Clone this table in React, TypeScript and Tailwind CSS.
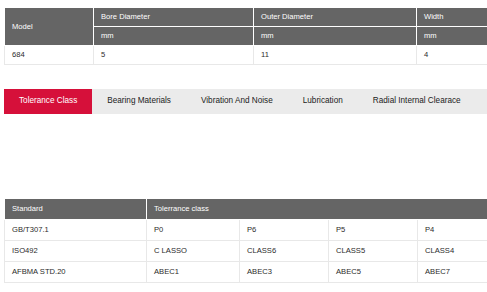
import React from 'react'

const tabs = ['Tolerance Class', 'Bearing Materials', 'Vibration And Noise', 'Lubrication', 'Radial Internal Clearace']

const rows = [
  ['GB/T307.1', 'P0', 'P6', 'P5', 'P4'],
  ['ISO492', 'C LASSO', 'CLASS6', 'CLASS5', 'CLASS4'],
  ['AFBMA STD.20', 'ABEC1', 'ABEC3', 'ABEC5', 'ABEC7'],
]

const th = 'bg-[#656565] text-white font-normal text-left px-[7px] border border-white'
const td = 'px-[7px] border border-[#e8e8e8] text-[#2b2b2b]'

export default function App() {
  return (
    <div
      className="w-[487px] h-[292px] overflow-hidden bg-white text-[7.6px] leading-none"
      style={{ fontFamily: '"Liberation Sans", Arial, sans-serif' }}
    >
      <div className="pt-[7px] pl-[4px]">
        <table className="table-fixed border-collapse w-[500px]">
          <colgroup>
            <col className="w-[89px]" />
            <col className="w-[160px]" />
            <col className="w-[163px]" />
            <col className="w-[88px]" />
          </colgroup>
          <thead>
            <tr className="h-[19px]">
              <th rowSpan={2} className={th}>Model</th>
              <th className={th}>Bore Diameter</th>
              <th className={th}>Outer Diameter</th>
              <th className={th}>Width</th>
            </tr>
            <tr className="h-[19px]">
              <th className={th}>mm</th>
              <th className={th}>mm</th>
              <th className={th}>mm</th>
            </tr>
          </thead>
          <tbody>
            <tr className="h-[19px]">
              <td className={td}>684</td>
              <td className={td}>5</td>
              <td className={td}>11</td>
              <td className={td}>4</td>
            </tr>
          </tbody>
        </table>
      </div>

      <div className="mt-[24px] ml-[4px] flex h-[25px] bg-[#ebebeb] text-[8.2px] text-[#222]">
        {tabs.map((t, i) => (
          <div
            key={t}
            className={`flex items-center px-[15px] ${i === 0 ? 'bg-[#d6103a] text-white' : ''}`}
          >
            {t}
          </div>
        ))}
      </div>

      <div className="mt-[84px] pl-[4px]">
        <table className="table-fixed border-collapse w-[500px]">
          <colgroup>
            <col className="w-[142px]" />
            <col className="w-[93px]" />
            <col className="w-[89px]" />
            <col className="w-[89px]" />
            <col className="w-[87px]" />
          </colgroup>
          <thead>
            <tr className="h-[21px]">
              <th className={th}>Standard</th>
              <th colSpan={4} className={th}>Tolerrance class</th>
            </tr>
          </thead>
          <tbody>
            {rows.map((r) => (
              <tr key={r[0]} className="h-[21px]">
                {r.map((c, j) => (
                  <td key={j} className={td}>{c}</td>
                ))}
              </tr>
            ))}
          </tbody>
        </table>
      </div>
    </div>
  )
}
